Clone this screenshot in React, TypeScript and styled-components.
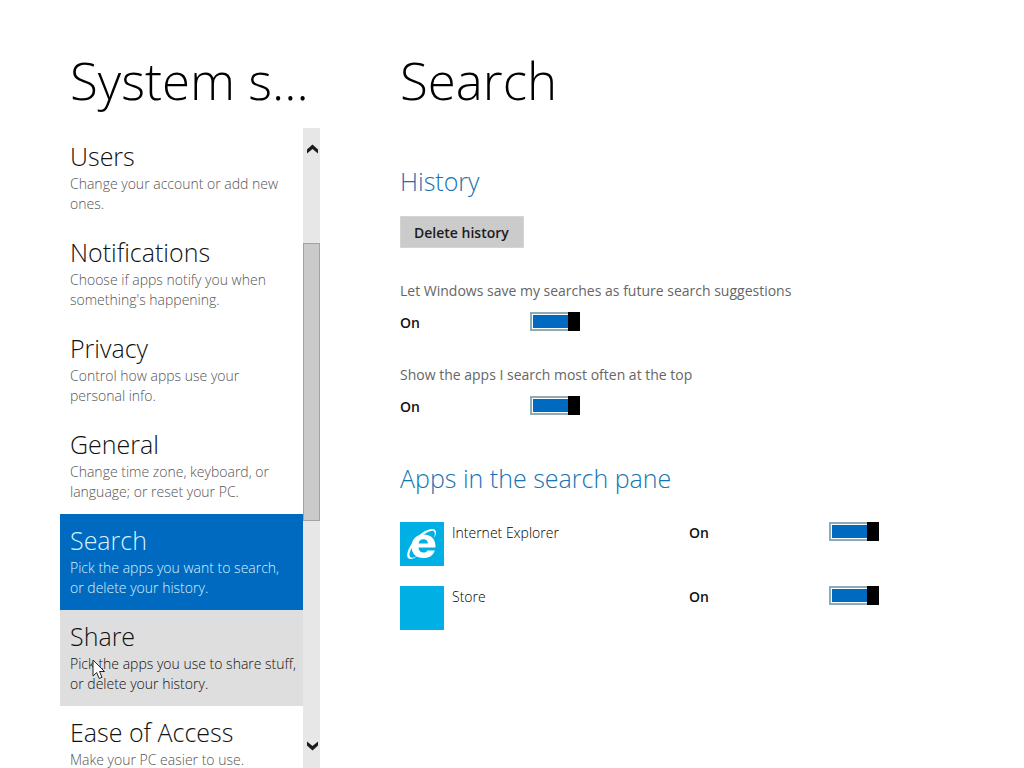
import React from "react";
import styled, { createGlobalStyle } from "styled-components";

const GlobalStyle = createGlobalStyle`
  *, *::before, *::after { box-sizing: border-box; }
  body {
    margin: 0;
    background: #fff;
    color: #000;
    font-family: "Open Sans", "Noto Sans", sans-serif;
    font-size: 14px;
    line-height: 20px;
    overflow: hidden;
  }
  h1, h2, p, ul { margin: 0; padding: 0; }
`;

const Page = styled.div`
  display: flex;
  gap: 80px;
  height: 100vh;
  padding-left: 60px;
  overflow: hidden;
`;

const Sidebar = styled.aside`
  display: flex;
  flex-direction: column;
  flex: 0 0 260px;
  min-height: 0;
`;

const Title = styled.h1<{ $inset?: boolean }>`
  flex: none;
  height: 128px;
  padding-top: 44px;
  padding-left: ${(p) => (p.$inset ? "10px" : "0")};
  font-size: 51px;
  line-height: 72px;
  font-weight: 300;
  white-space: nowrap;
`;

const ScrollArea = styled.div`
  display: flex;
  flex: 1;
  min-height: 0;
`;

const Menu = styled.nav`
  flex: 1;
  min-width: 0;
  padding-top: 2px;
  overflow: hidden;
`;

type ItemState = "normal" | "selected" | "hover";

const itemBackground = { normal: "transparent", selected: "#0069c0", hover: "#dedede" };
const itemHeading = { normal: "#111", selected: "#d5f3ff", hover: "#111" };
const itemDetail = { normal: "#555", selected: "#d5f3ff", hover: "#111" };

const MenuItem = styled.a<{ $state: ItemState }>`
  display: block;
  height: 96px;
  padding: 10px 0 0 10px;
  background: ${(p) => itemBackground[p.$state]};
  color: ${(p) => itemDetail[p.$state]};
  font-weight: 300;
  text-decoration: none;
  white-space: pre-line;
`;

const MenuHeading = styled.span<{ $state: ItemState }>`
  display: block;
  padding-bottom: 2px;
  font-size: 25px;
  line-height: 32px;
  color: ${(p) => itemHeading[p.$state]};
`;

const Scrollbar = styled.div`
  display: flex;
  flex-direction: column;
  flex: 0 0 17px;
  padding: 14px 0 15px;
  background: #e7e7e7;
`;

const ArrowButton = styled.button`
  display: flex;
  align-items: center;
  justify-content: flex-end;
  flex: 0 0 14px;
  padding: 0 1px 0 0;
  border: 0;
  background: none;
`;

const Track = styled.div`
  flex: 1;
  padding-top: 87px;
`;

const Thumb = styled.div`
  height: 278px;
  border: 1px solid #a3a3a3;
  background: #cacaca;
`;

const Content = styled.main`
  flex: 1;
  min-width: 0;
`;

const Section = styled.section<{ $top: number }>`
  padding-top: ${(p) => p.$top}px;
`;

const SectionTitle = styled.h2`
  font-size: 25px;
  line-height: 36px;
  font-weight: 300;
  color: #1474b4;
`;

const PushButton = styled.button`
  display: block;
  height: 32px;
  margin: 17px 0 33px;
  padding: 1px 14px 0 13px;
  border: 1px solid #d4d4d4;
  background: #cbcbcb;
  color: #1c1c1c;
  font: 600 14px/20px "Open Sans", sans-serif;
`;

const Setting = styled.div`
  margin-bottom: 32px;
`;

const SettingLabel = styled.label`
  display: block;
  margin-bottom: 11px;
  color: #666;
`;

const SettingRow = styled.div`
  display: flex;
  height: 21px;
`;

const StateText = styled.span<{ $width: number }>`
  flex: 0 0 ${(p) => p.$width}px;
  padding-top: 1px;
  font-weight: 600;
  color: #111;
`;

const ToggleFrame = styled.span`
  display: flex;
  position: relative;
  height: 19px;

  &::after {
    content: "";
    position: absolute;
    inset: 0 0 0 auto;
    width: 12px;
    background: #000;
    pointer-events: none;
  }
`;

const Toggle = styled.input`
  appearance: none;
  width: 50px;
  height: 19px;
  margin: 0;
  padding: 1px;
  border: 2px solid #8eabb8;
  background: #0069c0 content-box;
`;

const AppList = styled.ul`
  display: flex;
  flex-direction: column;
  gap: 20px;
  padding-top: 26px;
  list-style: none;
`;

const AppRow = styled.li`
  display: flex;
  height: 44px;
`;

const Tile = styled.span`
  flex: 0 0 44px;
  height: 44px;
  margin-right: 8px;
  background: #00b0e4;
`;

const AppName = styled.label`
  flex: 0 0 237px;
  padding-top: 1px;
  font-weight: 300;
  color: #000;
`;

const Pointer = styled.svg`
  position: absolute;
  left: 92px;
  top: 659px;
  pointer-events: none;
`;

const menu: { name: string; detail: string; state: ItemState }[] = [
  { name: "Users", detail: "Change your account or add new\nones.", state: "normal" },
  { name: "Notifications", detail: "Choose if apps notify you when\nsomething's happening.", state: "normal" },
  { name: "Privacy", detail: "Control how apps use your\npersonal info.", state: "normal" },
  { name: "General", detail: "Change time zone, keyboard, or\nlanguage; or reset your PC.", state: "normal" },
  { name: "Search", detail: "Pick the apps you want to search,\nor delete your history.", state: "selected" },
  { name: "Share", detail: "Pick the apps you use to share stuff,\nor delete your history.", state: "hover" },
  { name: "Ease of Access", detail: "Make your PC easier to use.", state: "normal" },
];

const settings = [
  { id: "save", label: "Let Windows save my searches as future search suggestions" },
  { id: "top", label: "Show the apps I search most often at the top" },
];

const apps = [
  { id: "ie", name: "Internet Explorer" },
  { id: "store", name: "Store" },
];

function Switch({ id }: { id: string }) {
  return (
    <ToggleFrame>
      <Toggle id={id} type="checkbox" role="switch" defaultChecked />
    </ToggleFrame>
  );
}

function Arrow({ down }: { down?: boolean }) {
  return (
    <svg width="13" height="10" viewBox="0 0 13 10" aria-hidden="true">
      <path
        d={down ? "M1 .5 6.500 5 12 .5V4.500L6.500 9.500 1 4.500Z" : "M1 9.500 6.500 5 12 9.500V5.500L6.500 .5 1 5.500Z"}
        fill="#1b1b1b"
      />
    </svg>
  );
}

function ExplorerLogo() {
  return (
    <svg width="44" height="44" viewBox="0 0 44 44" aria-hidden="true">
      <path
        fill="#fff"
        fillRule="evenodd"
        d="M35.500 25.500H18.500C18.700 28.800 20.500 30.600 23.500 30.600C25.500 30.600 26.900 29.800 27.600 28.500H34.800C33.200 33.600 29.300 36 23.500 36C16 36 11.500 31.600 11.500 24.800C11.500 17.500 16.200 12.500 23.600 12.500C31.500 12.500 35.800 17.300 35.500 25.500ZM18.600 21.500H28C27.800 18.800 26.200 17.300 23.400 17.300C20.700 17.300 19 18.800 18.600 21.500Z"
      />
      <path
        fill="#fff"
        d="M33.800 16C35.200 12.500 35.200 10.200 33.800 9.200C31.200 7.500 24 11.300 18 17.500C11.500 24.300 8 32.300 10 34.800C11.400 36.500 14.700 35.500 18.600 33C13.800 37.200 9.200 38.200 7.700 35.600C5.600 31.900 9.800 22.500 17 15.200C24.200 8 32.800 5.300 35.300 8.200C36.700 9.900 36.200 12.900 33.800 16Z"
      />
    </svg>
  );
}

export default function App() {
  return (
    <>
      <GlobalStyle />
      <Page>
        <Sidebar>
          <Title as="div" $inset>System s...</Title>
          <ScrollArea>
            <Menu>
              {menu.map((item) => (
                <MenuItem key={item.name} href="#" $state={item.state}>
                  <MenuHeading $state={item.state}>{item.name}</MenuHeading>
                  {item.detail}
                </MenuItem>
              ))}
            </Menu>
            <Scrollbar>
              <ArrowButton aria-label="Scroll up"><Arrow /></ArrowButton>
              <Track><Thumb /></Track>
              <ArrowButton aria-label="Scroll down"><Arrow down /></ArrowButton>
            </Scrollbar>
          </ScrollArea>
        </Sidebar>
        <Content>
          <Title>Search</Title>
          <Section $top={35}>
            <SectionTitle>History</SectionTitle>
            <PushButton>Delete history</PushButton>
            {settings.map((s) => (
              <Setting key={s.id}>
                <SettingLabel htmlFor={s.id}>{s.label}</SettingLabel>
                <SettingRow>
                  <StateText $width={130}>On</StateText>
                  <Switch id={s.id} />
                </SettingRow>
              </Setting>
            ))}
          </Section>
          <Section $top={11}>
            <SectionTitle>Apps in the search pane</SectionTitle>
            <AppList>
              {apps.map((a) => (
                <AppRow key={a.id}>
                  <Tile>{a.id === "ie" && <ExplorerLogo />}</Tile>
                  <AppName htmlFor={a.id}>{a.name}</AppName>
                  <StateText $width={140}>On</StateText>
                  <Switch id={a.id} />
                </AppRow>
              ))}
            </AppList>
          </Section>
        </Content>
      </Page>
      <Pointer width="14" height="22" viewBox="0 0 14 22" aria-hidden="true">
        <path d="M1 1V17L4.700 13.500 7.200 19.500 10 18.300 7.500 12.500H12.500Z" fill="#fff" stroke="#222" />
      </Pointer>
    </>
  );
}
